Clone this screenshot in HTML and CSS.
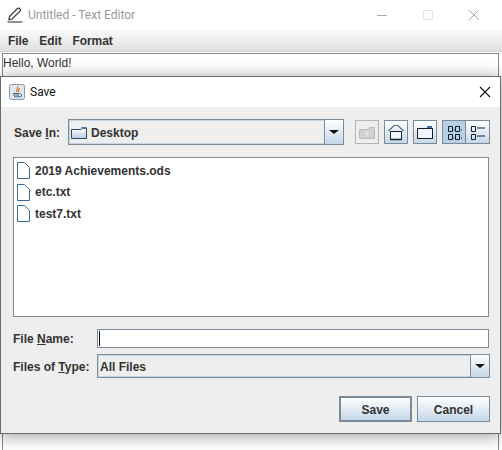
FILE: index.html
```html
<!DOCTYPE html>
<html lang="en">
<head>
  <meta charset="UTF-8" />
  <title>Untitled - Text Editor</title>
  <link rel="stylesheet" href="styles.css">
</head>
<body>
  <div class="app">
    <div class="titlebar">
      <svg class="app-icon" width="16" height="16" viewBox="0 0 16 16">
        <path d="M2.500 9.500 L10.500 1.500 C11.500 0.800 12.500 1 13 1.800 C13.700 2.600 13.700 3.500 13 4.200 L5 12 L2 12.800 Z" fill="none" stroke="#333" stroke-width="1.200"/>
        <path d="M0.500 15 H15.500" stroke="#222" stroke-width="1"/>
      </svg>
      <span class="app-title">Untitled - Text Editor</span>
      <div class="win-controls">
        <span class="win-btn"><svg width="12" height="12" viewBox="0 0 12 12"><path d="M1 6.500 H11" stroke="#aaa"/></svg></span>
        <span class="win-btn"><svg width="12" height="12" viewBox="0 0 12 12"><rect x="1.500" y="1.500" width="9" height="9" fill="none" stroke="#e2e2e2"/></svg></span>
        <span class="win-btn"><svg width="12" height="12" viewBox="0 0 12 12"><path d="M1 1 L11 11 M11 1 L1 11" stroke="#aaa"/></svg></span>
      </div>
    </div>
    <div class="menubar">
      <span>File</span>
      <span>Edit</span>
      <span>Format</span>
    </div>
    <div class="editor">Hello, World!</div>
  </div>

  <div class="dialog">
    <div class="dialog-title">
      <svg class="java-icon" width="16" height="16" viewBox="0 0 16 16">
        <rect x="0.500" y="0.500" width="15" height="15" rx="2" fill="#dfe6ee" stroke="#8a98a8"/>
        <path d="M8.500 2.500 C10 4.500 6.500 5.500 8 8 M10.500 4 C10.500 5.500 9 6 9.500 8" fill="none" stroke="#d9722a" stroke-width="1.200"/>
        <path d="M4 9.500 H10.500 M4 11 H10 M5 12.800 H12 C13 12 13 10 11 10" fill="none" stroke="#4a6a8c"/>
      </svg>
      <span class="dialog-name">Save</span>
      <svg class="dialog-close" width="12" height="12" viewBox="0 0 12 12">
        <path d="M1 1 L11 11 M11 1 L1 11" stroke="#111" stroke-width="1.100"/>
      </svg>
    </div>

    <div class="dialog-body">
      <div class="save-row">
        <label class="save-label">Save <u>I</u>n:</label>
        <div class="combo combo-top">
          <span class="combo-value">
            <svg width="17" height="14" viewBox="0 0 17 14">
              <defs>
                <linearGradient id="folderFill" x1="0" y1="0" x2="0" y2="1">
                  <stop offset="0" stop-color="#ffffff"/>
                  <stop offset="1" stop-color="#b9cde2"/>
                </linearGradient>
              </defs>
              <path d="M0.500 12.500 V3.500 H10 L11 2.500 H15.500 V12.500 Z" fill="url(#folderFill)" stroke="#33475c"/>
              <path d="M10.500 2 H15.500" stroke="#4a6fa8" stroke-width="2"/>
            </svg>
            Desktop
          </span>
          <span class="combo-arrow"><i></i></span>
        </div>
        <div class="tools">
          <span class="tool tool-off">
            <svg width="18" height="16" viewBox="0 0 18 16">
              <path d="M1.500 14.500 V5.500 H10 L11.500 3.500 H16.500 V14.500 Z" fill="#d2d2d2" stroke="#bcbcbc"/>
              <path d="M9 13 V8 M6.500 10 L9 7.500 L11.500 10" fill="none" stroke="#efefef"/>
            </svg>
          </span>
          <span class="tool">
            <svg width="18" height="18" viewBox="0 0 18 18">
              <path d="M3.500 16.500 V8.500 H14.500 V16.500 Z" fill="#f2f6fb" stroke="#10202f"/>
              <path d="M3.500 16.500 H14.500" stroke="#10202f" stroke-width="1.500"/>
              <path d="M1.500 8 L7 2.500 H11 L16.500 8" fill="none" stroke="#4c7090" stroke-width="1.200"/>
            </svg>
          </span>
          <span class="tool">
            <svg width="18" height="16" viewBox="0 0 18 16">
              <rect x="1.500" y="4.500" width="15" height="10" fill="#f2f6fb" stroke="#10202f"/>
              <path d="M11 3 H16" stroke="#4a6fa8" stroke-width="2"/>
            </svg>
          </span>
          <div class="view-group">
            <span class="tool tool-on">
              <svg width="16" height="16" viewBox="0 0 16 16">
                <path d="M2.500 2.500 H6.500 V7.500 H2.500 Z M2.500 10.500 H6.500 V15.500 H2.500 Z M9.500 2.500 H13.500 V7.500 H9.500 Z M9.500 10.500 H13.500 V15.500 H9.500 Z" fill="none" stroke="#10202f"/>
                <path d="M15 6 H16 M15 14 H16 M7.500 6 H8.500 M7.500 14 H8.500" stroke="#10202f"/>
              </svg>
            </span>
            <span class="tool">
              <svg width="16" height="16" viewBox="0 0 16 16">
                <path d="M1.500 2.500 H5.500 V7.500 H1.500 Z M1.500 10.500 H5.500 V15.500 H1.500 Z" fill="none" stroke="#10202f"/>
                <path d="M7 4 H15 M7 12 H15" stroke="#10202f"/>
              </svg>
            </span>
          </div>
        </div>
      </div>

      <ul class="file-list">
        <li>
          <svg width="13" height="17" viewBox="0 0 13 17"><path d="M0.500 0.500 H7.500 L12.500 5.500 V16.500 H0.500 Z" fill="#fff" stroke="#3a6a94"/></svg>
          2019 Achievements.ods
        </li>
        <li>
          <svg width="13" height="17" viewBox="0 0 13 17"><path d="M0.500 0.500 H7.500 L12.500 5.500 V16.500 H0.500 Z" fill="#fff" stroke="#3a6a94"/></svg>
          etc.txt
        </li>
        <li>
          <svg width="13" height="17" viewBox="0 0 13 17"><path d="M0.500 0.500 H7.500 L12.500 5.500 V16.500 H0.500 Z" fill="#fff" stroke="#3a6a94"/></svg>
          test7.txt
        </li>
      </ul>

      <div class="form-grid">
        <label>File <u>N</u>ame:</label>
        <div class="name-input"><span class="caret"></span></div>
        <label>Files of <u>T</u>ype:</label>
        <div class="combo combo-type">
          <span class="combo-value">All Files</span>
          <span class="combo-arrow"><i></i></span>
        </div>
      </div>

      <div class="actions">
        <button class="btn btn-default">Save</button>
        <button class="btn">Cancel</button>
      </div>
    </div>
  </div>
</body>
</html>
```

FILE: styles.css
```css
/* Reset and base */
* {
  box-sizing: border-box;
  margin: 0;
  padding: 0;
}

body {
  width: 502px;
  height: 450px;
  overflow: hidden;
  background: #fff;
  font-family: "Liberation Sans", Arial, sans-serif;
  font-size: 12px;
  font-weight: bold;
  color: #333;
}

/* Main window behind the dialog */
.app {
  height: 450px;
  display: flex;
  flex-direction: column;
}

.titlebar {
  height: 30px;
  display: flex;
  align-items: center;
  background: #fff;
}

.app-icon {
  margin-left: 7px;
}

.app-title {
  margin-left: 5px;
  font-family: Roboto, sans-serif;
  font-weight: normal;
  font-size: 12px;
  color: #9a9a9a;
}

.win-controls {
  margin-left: auto;
  display: flex;
  padding-right: 5px;
}

.win-btn {
  width: 46px;
  display: flex;
  justify-content: center;
}

.menubar {
  height: 22px;
  display: flex;
  align-items: center;
  gap: 11px;
  padding: 0 8px;
  background: linear-gradient(to bottom, #fbfbfb, #dfdfdf);
  border-bottom: 1px solid #d4d4d4;
  letter-spacing: -0.1px;
}

.editor {
  flex: 1;
  margin: 1px 3px 0 2px;
  padding: 1px 0;
  border: 1px solid #7a8a99;
  border-bottom: none;
  background: #fff;
  font-weight: normal;
  font-size: 12px;
  line-height: 16px;
  color: #333;
}

/* Save dialog, lies over the main window */
.dialog {
  position: absolute;
  left: 0;
  top: 76px;
  width: 501px;
  height: 358px;
  border: 1px solid #6b6b6b;
  background: #eeeeee;
  box-shadow: 0 2px 16px rgba(0, 0, 0, 0.4);
}

.dialog-title {
  height: 30px;
  display: flex;
  align-items: center;
  padding: 0 9px 0 8px;
  background: #fff;
}

.dialog-name {
  margin-left: 5px;
  font-family: Roboto, sans-serif;
  font-weight: normal;
  font-size: 12px;
  color: #111;
}

.dialog-close {
  margin-left: auto;
}

.dialog-body {
  padding: 12px 10px 0 12px;
}

.save-row {
  display: flex;
  align-items: center;
  height: 26px;
}

.save-label {
  width: 55px;
  padding: 2px 0 0 1px;
}

.combo {
  display: flex;
  border: 1px solid #7a8a99;
  background: #eeeeee;
}

.combo-top {
  width: 276px;
  height: 26px;
  box-shadow: inset 0 0 0 1px #c6d5e4;
}

.combo-value {
  flex: 1;
  display: flex;
  align-items: center;
  gap: 3px;
  padding: 2px 0 0 2px;
  font-size: 12px;
}

.combo-arrow {
  width: 19px;
  display: flex;
  align-items: center;
  justify-content: center;
  border-left: 1px solid #7a8a99;
  background: linear-gradient(to bottom, #fff, #c5d7e9);
}

.combo-arrow i {
  width: 0;
  height: 0;
  border-left: 5px solid transparent;
  border-right: 5px solid transparent;
  border-top: 4px solid #111;
}

.tools {
  display: flex;
  align-items: center;
  gap: 5px;
  margin-left: 11px;
}

.tool {
  width: 24px;
  height: 24px;
  display: flex;
  align-items: center;
  justify-content: center;
  border: 1px solid #7a8a99;
  background: linear-gradient(to bottom, #fff, #c5d7e9);
}

.tool-off {
  border-color: #b5b5b5;
  background: #eeeeee;
}

.tool-on {
  background: #b8cfe5;
}

.view-group {
  display: flex;
}

.view-group .tool:last-child {
  border-left: none;
  width: 24px;
}

.file-list {
  list-style: none;
  width: 476px;
  height: 160px;
  margin-top: 12px;
  padding: 2px 3px;
  border: 1px solid #7a8a99;
  background: #fff;
}

.file-list li {
  display: flex;
  align-items: center;
  gap: 5px;
  height: 21.500px;
}

.form-grid {
  display: grid;
  grid-template-columns: 84px 392px;
  grid-template-rows: 19px 24px;
  row-gap: 6px;
  align-items: center;
  margin-top: 12px;
}

.form-grid label {
  padding-top: 1px;
}

.name-input {
  height: 19px;
  display: flex;
  align-items: center;
  padding-left: 1px;
  border: 1px solid #7a8a99;
  background: #fff;
}

.caret {
  width: 1px;
  height: 15px;
  background: #111;
}

.combo-type {
  height: 24px;
  width: 393px;
  box-shadow: inset 0 0 0 1px #c6d5e4;
}

.actions {
  display: flex;
  justify-content: flex-end;
  gap: 5px;
  margin-top: 18px;
  width: 477px;
}

.btn {
  width: 73px;
  height: 26px;
  padding-top: 2px;
  border: 1px solid #7a8a99;
  background: linear-gradient(to bottom, #fff, #c5d7e9);
  font-family: inherit;
  font-size: 12px;
  font-weight: bold;
  color: #333;
}

.btn-default {
  border-width: 2px;
}
```
